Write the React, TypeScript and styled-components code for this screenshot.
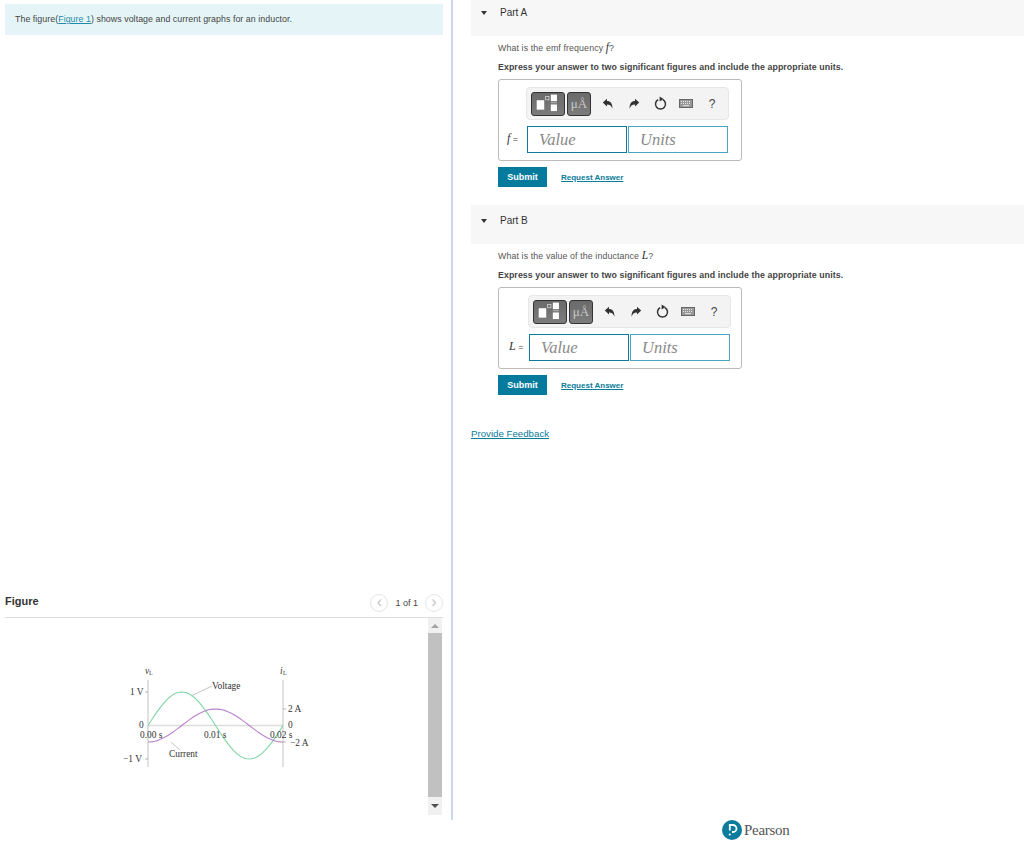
import styled, { createGlobalStyle } from 'styled-components';

const GlobalStyle = createGlobalStyle`
  html, body { margin: 0; padding: 0; background: #fff; }
  body { font-family: "Liberation Sans", Arial, sans-serif; color: #333; }
`;

// sampled sine curves for the figure
const X0 = 148;
const X1 = 283;
function curve(fn: (t: number) => number) {
  const pts: string[] = [];
  for (let i = 0; i <= 60; i++) {
    const t = i / 60;
    pts.push(`${(X0 + (X1 - X0) * t).toFixed(1)},${fn(t).toFixed(1)}`);
  }
  return 'M' + pts.join('L');
}
const voltagePath = curve(t => 725.5 - 33.5 * Math.sin(2 * Math.PI * t));
const currentPath = curve(t => 725.5 + 16.5 * Math.cos(2 * Math.PI * t));

function Chart() {
  return (
    <ChartSvg viewBox="110 660 220 110" width={220} height={110}>
      <line x1={148} y1={725.5} x2={283} y2={725.5} stroke="#ddd" strokeWidth={1.4} />
      <line x1={148} y1={680} x2={148} y2={767} stroke="#aaa" strokeWidth={0.7} />
      <line x1={283} y1={680} x2={283} y2={767} stroke="#aaa" strokeWidth={0.7} />
      <line x1={145} y1={692} x2={148} y2={692} stroke="#999" strokeWidth={0.7} />
      <line x1={145} y1={759} x2={148} y2={759} stroke="#999" strokeWidth={0.7} />
      <line x1={283} y1={709} x2={286} y2={709} stroke="#999" strokeWidth={0.7} />
      <line x1={283} y1={742} x2={286} y2={742} stroke="#999" strokeWidth={0.7} />
      <line x1={191} y1={696} x2={212} y2={686} stroke="#aaa" strokeWidth={0.7} />
      <line x1={171} y1={742} x2={180} y2={750} stroke="#aaa" strokeWidth={0.7} />
      <path d={voltagePath} fill="none" stroke="#7fd6a4" strokeWidth={1.1} />
      <path d={currentPath} fill="none" stroke="#bb83cf" strokeWidth={1.1} />
      <ChartLabel x={145} y={674} $italic>v</ChartLabel>
      <ChartLabel x={149} y={675} $small>L</ChartLabel>
      <ChartLabel x={280} y={674} $italic>i</ChartLabel>
      <ChartLabel x={283} y={675} $small>L</ChartLabel>
      <ChartLabel x={130} y={695}>1 V</ChartLabel>
      <ChartLabel x={139} y={728}>0</ChartLabel>
      <ChartLabel x={123} y={762}>−1 V</ChartLabel>
      <ChartLabel x={140} y={738}>0.00 s</ChartLabel>
      <ChartLabel x={204} y={738}>0.01 s</ChartLabel>
      <ChartLabel x={270} y={738}>0.02 s</ChartLabel>
      <ChartLabel x={288} y={712}>2 A</ChartLabel>
      <ChartLabel x={288} y={728}>0</ChartLabel>
      <ChartLabel x={290} y={746}>−2 A</ChartLabel>
      <ChartLabel x={212} y={689}>Voltage</ChartLabel>
      <ChartLabel x={169} y={757}>Current</ChartLabel>
    </ChartSvg>
  );
}

function TemplateIcon() {
  return (
    <svg width={34} height={24} viewBox="0 0 34 24">
      <rect x={5} y={8} width={8} height={10} fill="#fff" />
      <rect x={14.5} y={4} width={3.5} height={3.5} fill="none" stroke="#ddd" strokeWidth={0.8} />
      <rect x={20} y={2} width={6.5} height={7} fill="#fff" />
      <rect x={20} y={10.2} width={6.5} height={1} fill="#bbb" />
      <rect x={20} y={12.5} width={6.5} height={7} fill="#fff" />
    </svg>
  );
}

function UndoIcon({ flip }: { flip?: boolean }) {
  return (
    <svg width={12} height={12} viewBox="0 0 12 12" style={flip ? { transform: 'scaleX(-1)' } : undefined}>
      <path d="M0.8 4.6 L5 0.8 V3 C8.5 3 10.6 5.5 10.4 10.8 C9.6 7.8 8 6.4 5 6.4 V8.4 Z" fill="#333" />
    </svg>
  );
}

function ResetIcon() {
  return (
    <svg width={13} height={15} viewBox="0 0 13 15">
      <path d="M4.2 3.6 A5 5 0 1 0 8.8 3.6" fill="none" stroke="#333" strokeWidth={1.5} />
      <path d="M5.6 0.5 L9.6 3 L5.6 5.5 Z" fill="#333" />
    </svg>
  );
}

function KeyboardIcon() {
  return (
    <svg width={14} height={9} viewBox="0 0 14 9">
      <rect x={0.5} y={0.5} width={13} height={8} fill="#999" stroke="#666" strokeWidth={1} />
      <path d="M2 2.5H12M2 4.5H12" stroke="#e4e4e4" strokeWidth={1} strokeDasharray="1 1" />
      <path d="M4 6.7H10" stroke="#e4e4e4" strokeWidth={1} />
    </svg>
  );
}

function Answer({ symbol, shift }: { symbol: string; shift: number }) {
  return (
    <AnswerBox>
      <Toolbar $shift={shift}>
        <ToolButton $wide><TemplateIcon /></ToolButton>
        <ToolButton>μÅ</ToolButton>
        <IconSlot><UndoIcon /></IconSlot>
        <IconSlot><UndoIcon flip /></IconSlot>
        <IconSlot><ResetIcon /></IconSlot>
        <IconSlot><KeyboardIcon /></IconSlot>
        <HelpMark>?</HelpMark>
      </Toolbar>
      <InputRow $shift={shift}>
        <Symbol><i>{symbol}</i> =</Symbol>
        <Field placeholder="Value" $strong />
        <Field placeholder="Units" />
      </InputRow>
    </AnswerBox>
  );
}

function Part({ label, question, symbol, shift, first }: {
  label: string; question: string; symbol: string; shift: number; first?: boolean;
}) {
  return (
    <section>
      <PartHeader $first={first}>
        <Caret />
        <PartTitle>{label}</PartTitle>
      </PartHeader>
      <PartBody>
        <Question>{question} <i>{symbol}</i>?</Question>
        <Instruction>Express your answer to two significant figures and include the appropriate units.</Instruction>
        <Answer symbol={symbol} shift={shift} />
        <Actions>
          <SubmitButton>Submit</SubmitButton>
          <RequestLink href="#">Request Answer</RequestLink>
        </Actions>
      </PartBody>
    </section>
  );
}

export default function App() {
  return (
    <>
      <GlobalStyle />
      <Columns>
        <LeftPane>
          <Banner>
            The figure(<BannerLink href="#">Figure 1</BannerLink>) shows voltage and current graphs for an inductor.
          </Banner>
          <FigurePanel>
            <FigureHeader>
              <FigureTitle>Figure</FigureTitle>
              <Pager>
                <PagerButton>‹</PagerButton>
                <span>1 of 1</span>
                <PagerButton>›</PagerButton>
              </Pager>
            </FigureHeader>
            <FigureBody>
              <Chart />
              <Scrollbar>
                <ScrollArrow />
                <ScrollThumb />
                <ScrollArrow $down />
              </Scrollbar>
            </FigureBody>
          </FigurePanel>
        </LeftPane>
        <RightPane>
          <Part first label="Part A" question="What is the emf frequency" symbol="f" shift={0} />
          <Part label="Part B" question="What is the value of the inductance" symbol="L" shift={2} />
          <FeedbackLink href="#">Provide Feedback</FeedbackLink>
        </RightPane>
      </Columns>
      <Footer>
        <PearsonMark>
          <svg width={20} height={20} viewBox="0 0 20 20">
            <circle cx={10} cy={10} r={10} fill="#0b7c9b" />
            <path d="M7.8 10.5V5H11a3.4 3.4 0 0 1 0 7H10" fill="none" stroke="#fff" strokeWidth={1.8} />
            <circle cx={7.8} cy={14.5} r={1.1} fill="#fff" />
          </svg>
        </PearsonMark>
        <PearsonName>Pearson</PearsonName>
      </Footer>
    </>
  );
}

const Columns = styled.div`
  display: flex;
  height: 820px;
  overflow: hidden;
`;

const LeftPane = styled.div`
  width: 453px;
  flex: none;
  box-sizing: border-box;
  padding: 4px 8px 0 5px;
  display: flex;
  flex-direction: column;
  justify-content: space-between;
  border-right: 2px solid #c9d8ea;
`;

const Banner = styled.div`
  height: 31px;
  line-height: 31px;
  padding-left: 10px;
  background: #e5f5f7;
  font-size: 8.8px;
  letter-spacing: 0.06px;
  color: #444;
`;

const BannerLink = styled.a`
  color: #1f8cab;
  text-decoration: underline;
`;

const FigurePanel = styled.div`
  height: 238px;
  display: flex;
  flex-direction: column;
`;

const FigureHeader = styled.div`
  height: 36px;
  box-sizing: border-box;
  flex: none;
  border-bottom: 1px solid #ddd;
  display: flex;
  align-items: center;
  justify-content: space-between;
  padding-top: 7px;
`;

const FigureTitle = styled.div`
  font-size: 11px;
  font-weight: 700;
  color: #333;
  margin-top: -5px;
`;

const Pager = styled.div`
  display: flex;
  align-items: center;
  gap: 7px;
  font-size: 9px;
  color: #444;
`;

const PagerButton = styled.div`
  width: 18px;
  height: 18px;
  box-sizing: border-box;
  border: 1px solid #e6e6e6;
  border-radius: 50%;
  display: flex;
  align-items: center;
  justify-content: center;
  font-size: 16px;
  line-height: 1;
  color: #c4c4c4;
  padding-bottom: 2px;
`;

const FigureBody = styled.div`
  flex: 1;
  display: flex;
  justify-content: space-between;
  min-height: 0;
`;

const ChartSvg = styled.svg`
  display: block;
  margin: 42px 0 0 105px;
  flex: none;
`;

const ChartLabel = styled.text<{ $italic?: boolean; $small?: boolean }>`
  font-family: "Liberation Serif", serif;
  font-size: ${p => (p.$small ? 6 : 9.4)}px;
  font-style: ${p => (p.$italic ? 'italic' : 'normal')};
  fill: #333;
`;

const Scrollbar = styled.div`
  width: 14px;
  height: 197px;
  margin-right: 1px;
  background: #f1f1f1;
  display: flex;
  flex-direction: column;
  align-items: center;
`;

const ScrollArrow = styled.div<{ $down?: boolean }>`
  flex: none;
  width: 0;
  height: 0;
  border-left: 4px solid transparent;
  border-right: 4px solid transparent;
  ${p => (p.$down
    ? 'margin: 7px 0; border-top: 4px solid #505050;'
    : 'margin: 6px 0 5px; border-bottom: 4px solid #a3a3a3;')}
`;

const ScrollThumb = styled.div`
  flex: 1;
  width: 100%;
  background: #c1c1c1;
`;

const RightPane = styled.div`
  flex: 1;
  min-width: 0;
  padding-left: 18px;
`;

const PartHeader = styled.div<{ $first?: boolean }>`
  height: 39px;
  margin-top: ${p => (p.$first ? '-3px' : '18px')};
  box-sizing: border-box;
  background: #f7f7f7;
  display: flex;
  align-items: flex-start;
  padding-top: 10px;
`;

const Caret = styled.div`
  width: 0;
  height: 0;
  margin: 4px 0 0 10px;
  border-left: 3.5px solid transparent;
  border-right: 3.5px solid transparent;
  border-top: 4px solid #333;
`;

const PartTitle = styled.div`
  margin-left: 13px;
  font-size: 10px;
  line-height: 12px;
  color: #333;
`;

const PartBody = styled.div`
  padding: 6px 0 0 27px;
`;

const Question = styled.div`
  font-size: 8.8px;
  line-height: 12px;
  letter-spacing: 0.12px;
  color: #555;
  i { font-family: "Liberation Serif", serif; font-size: 11.5px; line-height: 0; color: #333; }
`;

const Instruction = styled.div`
  margin-top: 7px;
  font-size: 8.8px;
  line-height: 12px;
  font-weight: 700;
  letter-spacing: 0.08px;
  color: #444;
`;

const AnswerBox = styled.div`
  margin-top: 6px;
  width: 244px;
  height: 82px;
  box-sizing: border-box;
  border: 1px solid #bbb;
  border-radius: 3px;
  padding-top: 7px;
`;

const Toolbar = styled.div<{ $shift: number }>`
  width: 203px;
  height: 33px;
  box-sizing: border-box;
  margin-left: ${p => 27 + p.$shift}px;
  padding-left: 4px;
  background: #f3f3f3;
  border: 1px solid #e6e6e6;
  border-radius: 4px;
  display: flex;
  align-items: center;
`;

const ToolButton = styled.div<{ $wide?: boolean }>`
  width: ${p => (p.$wide ? 34 : 24)}px;
  height: 24px;
  flex: none;
  box-sizing: border-box;
  margin-right: ${p => (p.$wide ? 2 : 4)}px;
  border: 1px solid #333;
  border-radius: 3px;
  background: linear-gradient(#6a6a6a, #7c7c7c);
  color: #c8c8c8;
  font-family: "Liberation Serif", serif;
  font-size: 13px;
  display: flex;
  align-items: center;
  justify-content: center;
  svg { display: block; }
`;

const IconSlot = styled.div`
  width: 26px;
  flex: none;
  display: flex;
  justify-content: center;
`;

const HelpMark = styled.div`
  width: 26px;
  text-align: center;
  font-size: 12px;
  color: #444;
`;

const InputRow = styled.div<{ $shift: number }>`
  margin: 6px 0 0 ${p => 8 + p.$shift}px;
  display: flex;
  align-items: center;
`;

const Symbol = styled.div`
  width: 20px;
  flex: none;
  margin-top: -3px;
  font-size: 9px;
  color: #444;
  i { font-family: "Liberation Serif", serif; font-size: 12px; color: #333; }
`;

const Field = styled.input<{ $strong?: boolean }>`
  width: 100px;
  height: 27px;
  box-sizing: border-box;
  margin-right: 1px;
  padding: 0 0 0 11px;
  border: 1px solid ${p => (p.$strong ? '#0b7c9b' : '#4ba5bd')};
  border-radius: 0;
  outline: none;
  background: #fff;
  font-family: "Liberation Serif", serif;
  font-style: italic;
  font-size: 16.5px;
  &::placeholder { color: #8a8a8a; opacity: 1; }
`;

const Actions = styled.div`
  margin-top: 6px;
  display: flex;
  align-items: center;
`;

const SubmitButton = styled.button`
  width: 49px;
  height: 20px;
  padding: 0 0 1px;
  border: none;
  background: #047a9c;
  color: #fff;
  font-family: inherit;
  font-size: 9px;
  font-weight: 700;
`;

const RequestLink = styled.a`
  margin-left: 14px;
  color: #0b7c9b;
  font-size: 8px;
  font-weight: 700;
  text-decoration: underline;
`;

const FeedbackLink = styled.a`
  display: block;
  margin-top: 33px;
  color: #0b7c9b;
  font-size: 9.7px;
  line-height: 12px;
  text-decoration: underline;
`;

const Footer = styled.div`
  height: 24px;
  padding-left: 722px;
  display: flex;
  align-items: flex-start;
  gap: 2px;
`;

const PearsonMark = styled.div`
  width: 20px;
  height: 20px;
  flex: none;
  svg { display: block; }
`;

const PearsonName = styled.div`
  font-family: "Liberation Serif", serif;
  font-size: 15px;
  line-height: 20px;
  letter-spacing: -0.3px;
  color: #555;
`;
